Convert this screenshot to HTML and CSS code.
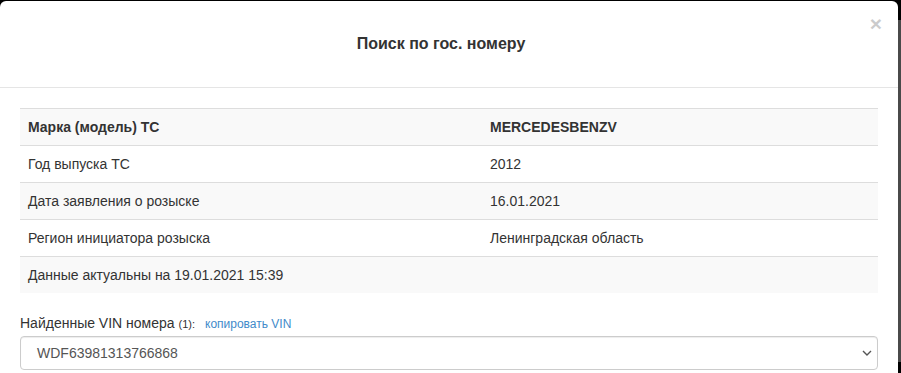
FILE: index.html
```html
<!DOCTYPE html>
<html lang="ru">
<head>
<meta charset="utf-8">
<title>Поиск по гос. номеру</title>
<link rel="stylesheet" href="styles.css">
</head>
<body>
<div class="screen">
  <div class="modal">
    <div class="modal-header">
      <h4 class="modal-title">Поиск по гос. номеру</h4>
      <span class="close">×</span>
    </div>
    <div class="modal-body">
      <table class="table">
        <tbody>
          <tr class="odd"><th class="col-name">Марка (модель) ТС</th><th>MERCEDESBENZV</th></tr>
          <tr><td class="col-name">Год выпуска ТС</td><td>2012</td></tr>
          <tr class="odd"><td class="col-name">Дата заявления о розыске</td><td>16.01.2021</td></tr>
          <tr><td class="col-name">Регион инициатора розыска</td><td>Ленинградская область</td></tr>
          <tr class="odd"><td colspan="2">Данные актуальны на 19.01.2021 15:39</td></tr>
        </tbody>
      </table>
      <div class="vin-label">Найденные VIN номера <small class="count">(1):</small><a class="copy" href="#">копировать VIN</a></div>
      <div class="select">
        <span>WDF63981313766868</span>
        <svg class="chevron" width="10" height="6" viewBox="0 0 10 6"><path d="M1 1 L5 5 L9 1" fill="none" stroke="#555" stroke-width="1.4"/></svg>
      </div>
    </div>
  </div>
  <div class="scroll-strip"></div>
</div>
</body>
</html>
```
FILE: styles.css
```css
html, body {
  margin: 0;
  padding: 0;
  background: #000;
  overflow: hidden;
}
body {
  font-family: "Liberation Sans", Arial, Helvetica, sans-serif;
  font-size: 14px;
  line-height: 20px;
  color: #333;
}
.screen {
  display: flex;
  align-items: flex-start;
  padding-top: 1px;
  height: 372px;
  overflow: hidden;
}
.modal {
  width: 898px;
  flex: none;
  background: #fff;
  border-radius: 6px;
  height: 400px;
}
.scroll-strip {
  width: 3px;
  margin-top: 19px;
  height: 342px;
  background: #4a4a4a;
}
.modal-header {
  display: flex;
  justify-content: center;
  align-items: center;
  height: 86px;
  border-bottom: 1px solid #e5e5e5;
  position: relative;
  padding-right: 16px;
}
.modal-title {
  margin: 0;
  font-size: 16px;
  font-weight: bold;
  line-height: 20px;
  color: #333;
}
.close {
  position: absolute;
  right: 16px;
  top: 12px;
  font-size: 21px;
  font-weight: bold;
  line-height: 1;
  color: #000;
  opacity: 0.2;
}
.modal-body {
  padding: 20px;
}
.table {
  width: 100%;
  border-collapse: collapse;
  border-spacing: 0;
  margin-bottom: 20px;
}
.table th, .table td {
  padding: 8px;
  text-align: left;
  border-top: 1px solid #ddd;
  line-height: 20px;
  vertical-align: top;
}
.table th {
  font-weight: bold;
}
.table .col-name {
  width: 446px;
}
.table tr.odd {
  background: #f9f9f9;
}
.vin-label {
  margin-bottom: 2px;
}
.count {
  font-size: 11px;
}
.copy {
  margin-left: 10px;
  font-size: 12px;
  color: #428bca;
  text-decoration: none;
}
.select {
  height: 32px;
  border: 1px solid #ccc;
  border-radius: 4px;
  display: flex;
  align-items: center;
  justify-content: space-between;
  padding: 0 5px 0 16px;
  color: #555;
  box-shadow: inset 0 1px 1px rgba(0,0,0,.075);
}
.chevron {
  display: block;
}
```
